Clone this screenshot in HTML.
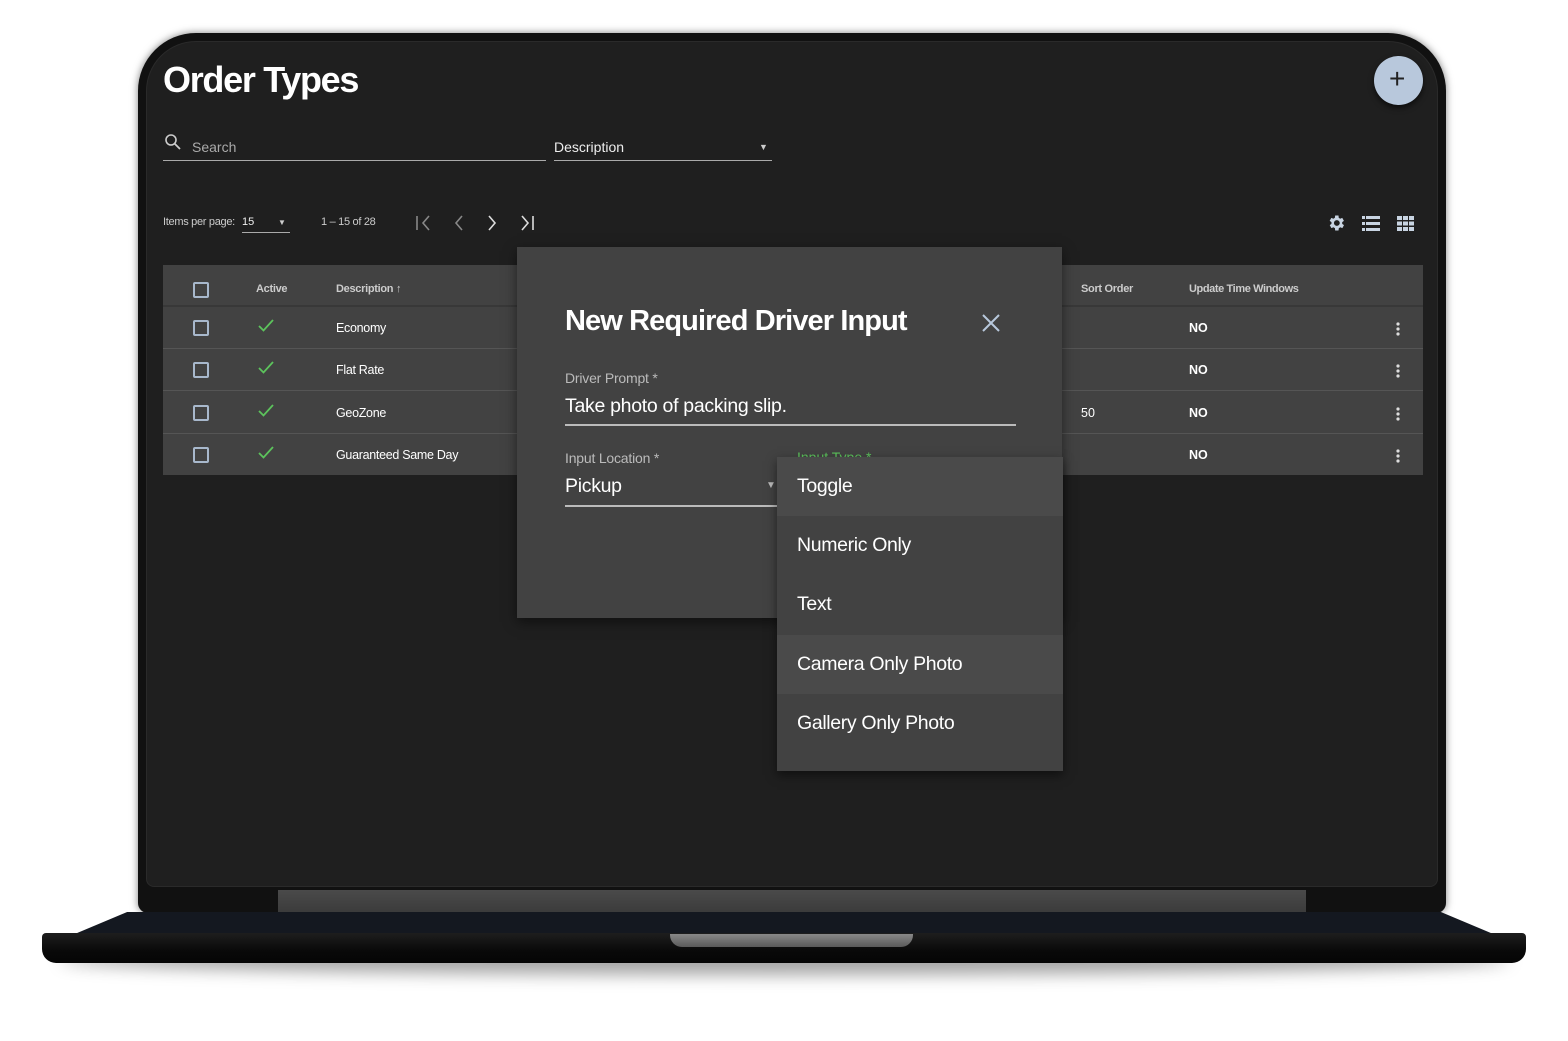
<!DOCTYPE html>
<html><head><style>
*{margin:0;padding:0;box-sizing:border-box}
body{width:1568px;height:1041px;background:#fff;position:relative;overflow:hidden;font-family:"Liberation Sans",Arial,sans-serif;color:#fff}
.a{position:absolute}
.t{position:absolute;white-space:nowrap}
</style></head><body>
<div class="a" style="left:60px;top:945px;width:1450px;height:30px;border-radius:50%;background:rgba(0,0,0,.35);filter:blur(8px)"></div>
<div class="a" style="left:138px;top:33px;width:1308px;height:880px;border-radius:58px 58px 10px 10px;background:#111;box-shadow:0 0 8px rgba(0,0,0,.5)"></div>
<div class="a" style="left:146px;top:41px;width:1292px;height:846px;border-radius:50px 50px 8px 8px;background:#1f1f1f;border:1px solid #2a2a2a"></div>
<div class="a" style="left:278px;top:890px;width:1028px;height:24px;background:linear-gradient(#4a4a4a,#3a3a3a)"></div>
<div class="a" style="left:70px;top:912px;width:1428px;height:24px;background:#141820;clip-path:polygon(4% 0,96% 0,100% 100%,0 100%)"></div>
<div class="a" style="left:42px;top:933px;width:1484px;height:30px;border-radius:4px 4px 14px 14px;background:linear-gradient(#1e1e1e,#090909 60%,#050505)"></div>
<div class="a" style="left:670px;top:934px;width:243px;height:13px;border-radius:0 0 12px 12px;background:linear-gradient(#888,#5a5a5a)"></div>

<div class="t" style="left:163px;top:59px;font-size:36px;font-weight:bold;letter-spacing:-1.3px">Order Types</div>
<div class="a" style="left:1374px;top:56px;width:49px;height:49px;border-radius:50%;background:#b8c8dc;box-shadow:0 3px 6px rgba(0,0,0,.6)"></div>
<div class="t" style="left:1389px;top:63px;font-size:28px;color:#222">+</div>

<svg class="a" style="left:164px;top:133px" width="18" height="18" viewBox="0 0 18 18"><circle cx="7" cy="7" r="5" fill="none" stroke="#ccc" stroke-width="1.6"/><path d="M11 11l5 5" stroke="#ccc" stroke-width="1.8"/></svg>
<div class="t" style="left:192px;top:139px;font-size:14px;color:#aaa">Search</div>
<div class="a" style="left:163px;top:160px;width:383px;height:1px;background:#aaa"></div>
<div class="t" style="left:554px;top:139px;font-size:14px;color:#eee">Description</div>
<div class="t" style="left:759px;top:142px;font-size:9px;color:#ccc">▼</div>
<div class="a" style="left:554px;top:160px;width:218px;height:1px;background:#aaa"></div>

<div class="t" style="left:163px;top:216px;font-size:11px;color:#ccc;letter-spacing:-0.3px">Items per page:</div>
<div class="t" style="left:242px;top:216px;font-size:11px;color:#eee">15</div>
<div class="t" style="left:278px;top:218px;font-size:8px;color:#ccc">▼</div>
<div class="a" style="left:242px;top:232px;width:48px;height:1px;background:#aaa"></div>
<div class="t" style="left:321px;top:216px;font-size:11px;color:#ccc;letter-spacing:-0.3px">1 – 15 of 28</div>
<svg class="a" style="left:412px;top:212px" width="130" height="22" viewBox="0 0 130 22"><g fill="none" stroke="#888" stroke-width="1.6"><path d="M5 4v14M17 4l-6 7 6 7M50 4l-6 7 6 7"/></g><g fill="none" stroke="#ddd" stroke-width="1.6"><path d="M77 4l6 7-6 7M110 4l6 7-6 7M121 4v14"/></g></svg>

<svg class="a" style="left:1326px;top:213px" width="20" height="20" viewBox="0 0 24 24"><path fill="#c8d4e2" d="M19.4 13a7.5 7.5 0 000-2l2.1-1.6-2-3.5-2.5 1a7 7 0 00-1.7-1L15 3h-4l-.4 2.9a7 7 0 00-1.7 1l-2.5-1-2 3.5L6.6 11a7.5 7.5 0 000 2l-2.1 1.6 2 3.5 2.5-1a7 7 0 001.7 1L11 21h4l.4-2.9a7 7 0 001.7-1l2.5 1 2-3.5zM13 15.5a3.5 3.5 0 110-7 3.5 3.5 0 010 7z"/></svg>
<svg class="a" style="left:1362px;top:216px" width="18" height="15" viewBox="0 0 18 15"><g fill="#c8d4e2"><rect x="0" y="0" width="3" height="3"/><rect x="4" y="0" width="14" height="3"/><rect x="0" y="6" width="3" height="3"/><rect x="4" y="6" width="14" height="3"/><rect x="0" y="12" width="3" height="3"/><rect x="4" y="12" width="14" height="3"/></g></svg>
<svg class="a" style="left:1397px;top:216px" width="17" height="15" viewBox="0 0 17 15"><g fill="#c8d4e2"><rect x="0" y="0" width="5" height="4"/><rect x="6" y="0" width="5" height="4"/><rect x="12" y="0" width="5" height="4"/><rect x="0" y="5.5" width="5" height="4"/><rect x="6" y="5.5" width="5" height="4"/><rect x="12" y="5.5" width="5" height="4"/><rect x="0" y="11" width="5" height="4"/><rect x="6" y="11" width="5" height="4"/><rect x="12" y="11" width="5" height="4"/></g></svg>

<div class="a" style="left:163px;top:265px;width:1260px;height:210px;background:#424242"></div>
<div class="a" style="left:163px;top:305px;width:1260px;height:2px;background:#383838"></div>
<div class="a" style="left:163px;top:348px;width:1260px;height:1px;background:#555"></div>
<div class="a" style="left:163px;top:390px;width:1260px;height:1px;background:#555"></div>
<div class="a" style="left:163px;top:433px;width:1260px;height:1px;background:#555"></div>
<div class="t" style="left:256px;top:283px;font-size:11px;color:#ccc;font-weight:bold;letter-spacing:-0.3px">Active</div>
<div class="t" style="left:336px;top:283px;font-size:11px;color:#ccc;font-weight:bold;letter-spacing:-0.3px">Description ↑</div>
<div class="t" style="left:1081px;top:283px;font-size:11px;color:#ccc;font-weight:bold;letter-spacing:-0.3px">Sort Order</div>
<div class="t" style="left:1189px;top:283px;font-size:11px;color:#ccc;font-weight:bold;letter-spacing:-0.4px">Update Time Windows</div>
<div class="a" style="left:193px;top:282px;width:16px;height:16px;border:2px solid #a8b8cc;border-radius:2px"></div>
<div class="a" style="left:193px;top:320px;width:16px;height:16px;border:2px solid #a8b8cc;border-radius:2px"></div>
<div class="a" style="left:193px;top:362px;width:16px;height:16px;border:2px solid #a8b8cc;border-radius:2px"></div>
<div class="a" style="left:193px;top:405px;width:16px;height:16px;border:2px solid #a8b8cc;border-radius:2px"></div>
<div class="a" style="left:193px;top:447px;width:16px;height:16px;border:2px solid #a8b8cc;border-radius:2px"></div>
<svg class="a" style="left:258px;top:319px" width="16" height="13" viewBox="0 0 16 13"><path d="M1 7l4.5 4.5L15 1" fill="none" stroke="#5cc35c" stroke-width="1.8"/></svg>
<svg class="a" style="left:258px;top:361px" width="16" height="13" viewBox="0 0 16 13"><path d="M1 7l4.5 4.5L15 1" fill="none" stroke="#5cc35c" stroke-width="1.8"/></svg>
<svg class="a" style="left:258px;top:404px" width="16" height="13" viewBox="0 0 16 13"><path d="M1 7l4.5 4.5L15 1" fill="none" stroke="#5cc35c" stroke-width="1.8"/></svg>
<svg class="a" style="left:258px;top:446px" width="16" height="13" viewBox="0 0 16 13"><path d="M1 7l4.5 4.5L15 1" fill="none" stroke="#5cc35c" stroke-width="1.8"/></svg>
<div class="t" style="left:336px;top:321px;font-size:12.5px;letter-spacing:-0.3px">Economy</div>
<div class="t" style="left:336px;top:363px;font-size:12.5px;letter-spacing:-0.3px">Flat Rate</div>
<div class="t" style="left:336px;top:406px;font-size:12.5px;letter-spacing:-0.3px">GeoZone</div>
<div class="t" style="left:336px;top:448px;font-size:12.5px;letter-spacing:-0.3px">Guaranteed Same Day</div>
<div class="t" style="left:1081px;top:406px;font-size:12.5px">50</div>
<div class="t" style="left:1189px;top:321px;font-size:12.5px;font-weight:bold">NO</div>
<div class="t" style="left:1189px;top:363px;font-size:12.5px;font-weight:bold">NO</div>
<div class="t" style="left:1189px;top:406px;font-size:12.5px;font-weight:bold">NO</div>
<div class="t" style="left:1189px;top:448px;font-size:12.5px;font-weight:bold">NO</div>
<svg class="a" style="left:1395px;top:321px" width="6" height="150" viewBox="0 0 6 150"><g fill="#ddd"><circle cx="3" cy="3" r="1.6"/><circle cx="3" cy="8" r="1.6"/><circle cx="3" cy="13" r="1.6"/><circle cx="3" cy="45" r="1.6"/><circle cx="3" cy="50" r="1.6"/><circle cx="3" cy="55" r="1.6"/><circle cx="3" cy="88" r="1.6"/><circle cx="3" cy="93" r="1.6"/><circle cx="3" cy="98" r="1.6"/><circle cx="3" cy="130" r="1.6"/><circle cx="3" cy="135" r="1.6"/><circle cx="3" cy="140" r="1.6"/></g></svg>

<div class="a" style="left:517px;top:247px;width:545px;height:371px;background:#424242;box-shadow:0 4px 12px rgba(0,0,0,.5)"></div>
<div class="t" style="left:565px;top:305px;font-size:29px;font-weight:bold;letter-spacing:-0.9px">New Required Driver Input</div>
<svg class="a" style="left:982px;top:314px" width="18" height="18" viewBox="0 0 18 18"><path d="M1 1l16 16M17 1L1 17" stroke="#b8c8dc" stroke-width="2"/></svg>
<div class="t" style="left:565px;top:370px;font-size:14px;color:#bbb;letter-spacing:-0.2px">Driver Prompt *</div>
<div class="t" style="left:565px;top:395px;font-size:19.5px;letter-spacing:-0.3px">Take photo of packing slip.</div>
<div class="a" style="left:565px;top:424px;width:451px;height:2px;background:#bbb"></div>
<div class="t" style="left:565px;top:450px;font-size:14px;color:#bbb;letter-spacing:-0.2px">Input Location *</div>
<div class="t" style="left:565px;top:475px;font-size:19.5px;letter-spacing:-0.3px">Pickup</div>
<div class="t" style="left:766px;top:480px;font-size:10px;color:#bbb">▼</div>
<div class="a" style="left:565px;top:505px;width:213px;height:2px;background:#bbb"></div>
<div class="t" style="left:797px;top:449px;font-size:14px;color:#5cc35c">Input Type *</div>

<div class="a" style="left:777px;top:457px;width:286px;height:314px;background:#424242;box-shadow:0 4px 10px rgba(0,0,0,.5)"></div>
<div class="a" style="left:777px;top:457px;width:286px;height:59px;background:#4a4a4a"></div>
<div class="a" style="left:777px;top:635px;width:286px;height:59px;background:#4a4a4a"></div>
<div class="t" style="left:797px;top:475px;font-size:19.5px;letter-spacing:-0.35px">Toggle</div>
<div class="t" style="left:797px;top:534px;font-size:19.5px;letter-spacing:-0.35px">Numeric Only</div>
<div class="t" style="left:797px;top:593px;font-size:19.5px;letter-spacing:-0.35px">Text</div>
<div class="t" style="left:797px;top:653px;font-size:19.5px;letter-spacing:-0.35px">Camera Only Photo</div>
<div class="t" style="left:797px;top:712px;font-size:19.5px;letter-spacing:-0.35px">Gallery Only Photo</div>
</body></html>
